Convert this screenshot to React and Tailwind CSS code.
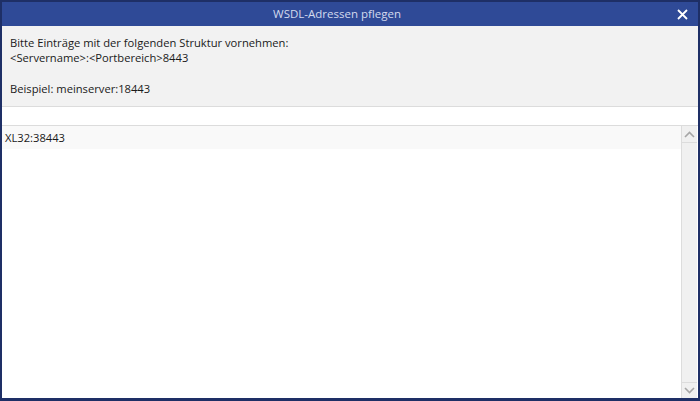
export default function App() {
  const font = { fontFamily: '"Segoe UI", "Open Sans", "Noto Sans", sans-serif' };
  return (
    <div className="w-[700px] h-[401px] bg-[#1e2f66] pt-[2px] px-[2px] pb-[3px] flex flex-col" style={font}>
      <div className="h-[24px] bg-[#2f4a97] flex items-center relative shrink-0">
        <div className="flex-1 text-center text-[11.5px] text-[#d3daee] pr-[26px]">WSDL-Adressen pflegen</div>
        <svg className="absolute right-[10px] top-[7px]" width="11" height="11" viewBox="0 0 11 11">
          <path d="M1 1 L10 10 M10 1 L1 10" stroke="#ffffff" strokeWidth="1.8" />
        </svg>
      </div>
      <div className="h-[80px] bg-[#f2f2f2] shrink-0 pl-[8px] pt-[10px] text-[11.2px] leading-[14.5px] text-[#1a1a1a]">
        <div>Bitte Einträge mit der folgenden Struktur vornehmen:</div>
        <div>&lt;Servername&gt;:&lt;Portbereich&gt;8443</div>
        <div className="mt-[17px]">Beispiel: meinserver:18443</div>
      </div>
      <div className="h-[20px] bg-white border-y border-[#dcdcdc] shrink-0" />
      <div className="flex-1 bg-white flex min-h-0">
        <div className="flex-1">
          <div className="h-[23px] bg-[#f9f9f9] pl-[3px] pt-[5px] text-[11.2px] leading-[14px] text-[#1a1a1a]">XL32:38443</div>
        </div>
        <div className="w-[16px] bg-[#f0f0f0] border-l border-[#dcdcdc] flex flex-col justify-between">
          <div className="h-[17px] border-b border-[#dcdcdc] flex items-center justify-center">
            <svg width="11" height="7" viewBox="0 0 11 7">
              <path d="M1 6 L5.5 1.5 L10 6" stroke="#a6a6a6" strokeWidth="1.6" fill="none" />
            </svg>
          </div>
          <div className="h-[16px] border-t border-[#dcdcdc] flex items-center justify-center">
            <svg width="11" height="7" viewBox="0 0 11 7">
              <path d="M1 1 L5.5 5.5 L10 1" stroke="#a6a6a6" strokeWidth="1.6" fill="none" />
            </svg>
          </div>
        </div>
        <div className="w-[1px] bg-white" />
      </div>
    </div>
  );
}
